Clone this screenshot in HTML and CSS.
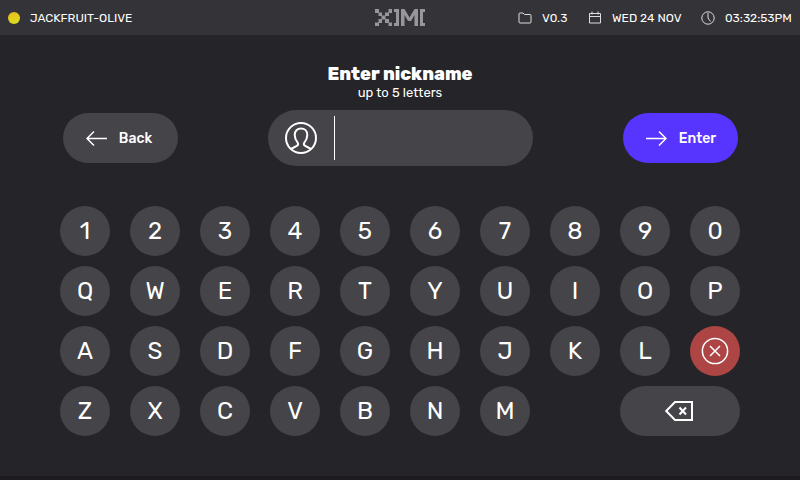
FILE: index.html
```html
<!DOCTYPE html>
<html lang="en">
<head>
<meta charset="utf-8">
<title>Enter nickname</title>
<link rel="stylesheet" href="styles.css">
</head>
<body>
<header class="bar">
  <div class="bar-left"><span class="dot"></span><span class="host">JACKFRUIT-OLIVE</span></div>
  <svg class="logo" width="50" height="17" viewBox="0 0 50 17" fill="#97969a">
    <path d="M0 0h4v4H0zM13.500 0H17v4h-3.500zM3.500 3.500H7V7H3.500zM10 3.500h4V7h-4zM6.500 6.500h4v4h-4zM3.500 10H7v4H3.500zM10 10h4v4h-4zM0 13.500h4V17H0zM13.500 13.500H17V17h-3.500z"/>
    <path d="M19 0h5v17h-5v-3h2V3h-2zM26 0h3.500l5 8.500L39.500 0H43v17h-3.500V6l-3.500 6h-3l-3.500-6v11H26zM45 0h5v3h-2v11h2v3h-5z"/>
  </svg>
  <div class="bar-right">
    <svg class="ico" width="14" height="12" viewBox="0 0 14 12"><path d="M1 10V2q0-1 1-1h3l1.500 1.500H12q1 0 1 1V10q0 1-1 1H2q-1 0-1-1z"/></svg>
    <span class="version">V0.3</span>
    <svg class="ico" width="12" height="13" viewBox="0 0 12 13"><path d="M.5 2.500h11v9.500H.5zM.5 5.500h11M3 .5v3M9 .5v3"/></svg>
    <span class="date">WED 24 NOV</span>
    <svg class="ico" width="14" height="14" viewBox="0 0 14 14"><circle cx="7" cy="7" r="6.200"/><path d="M7 2v5l2.500 3.500"/></svg>
    <span class="time">03:32:53PM</span>
  </div>
</header>
<main class="page">
  <h1 class="title">Enter nickname</h1>
  <p class="hint">up to 5 letters</p>
  <div class="entry">
    <button class="pill back"><svg width="22" height="16" viewBox="0 0 22 16"><path d="M21 8.500H1M8 1.500l-7 7 7 7"/></svg><span>Back</span></button>
    <div class="field">
      <svg class="avatar" width="34" height="34" viewBox="0 0 34 34"><circle cx="17" cy="17" r="15"/><path d="M7 28l5.800-3.100q2-1 1-3c-2-2.700-3.100-4.900-3.100-8 0-4 2.600-6.400 6.300-6.400s6.300 2.400 6.300 6.400c0 3.100-1.100 5.300-3.100 8q-1 2 1 3L27 28"/></svg>
      <span class="caret"></span>
    </div>
    <button class="pill primary"><svg width="22" height="16" viewBox="0 0 22 16"><path d="M1 8.500h20M14 1.500l7 7-7 7"/></svg><span>Enter</span></button>
  </div>
  <div class="keys">
    <button>1</button><button>2</button><button>3</button><button>4</button><button>5</button><button>6</button><button>7</button><button>8</button><button>9</button><button>0</button>
    <button>Q</button><button>W</button><button>E</button><button>R</button><button>T</button><button>Y</button><button>U</button><button>I</button><button>O</button><button>P</button>
    <button>A</button><button>S</button><button>D</button><button>F</button><button>G</button><button>H</button><button>J</button><button>K</button><button>L</button>
    <button class="clear"><svg width="28" height="28" viewBox="0 0 28 28"><circle cx="14" cy="14" r="12.600"/><path d="M9 9l10 10M19 9L9 19"/></svg></button>
    <button>Z</button><button>X</button><button>C</button><button>V</button><button>B</button><button>N</button><button>M</button>
    <button class="erase"><svg width="28" height="20" viewBox="0 0 28 20"><path d="M10 1h17v18H10L1.200 10zM14.500 6.500l6.500 7M21 6.500l-6.500 7"/></svg></button>
  </div>
</main>
</body>
</html>
```
FILE: styles.css
```css
* { box-sizing: border-box; }
body {
  margin: 0;
  width: 800px;
  height: 480px;
  overflow: hidden;
  background: #252429;
  color: #fff;
  font-family: Rubik, Roboto, "Liberation Sans", sans-serif;
  border-bottom: 4px solid #1d1a20;
}
.bar {
  height: 35px;
  padding: 0 8px;
  display: grid;
  grid-template-columns: 1fr 50px 1fr;
  align-items: center;
  background: #343338;
  font-size: 12px;
  line-height: 16px;
  white-space: nowrap;
}
.bar-left, .bar-right { display: flex; align-items: center; }
.bar-right { justify-content: flex-end; }
.dot {
  width: 12px;
  height: 12px;
  margin-right: 10px;
  border-radius: 50%;
  background: linear-gradient(160deg, #eeb91f, #d5e51e);
}
.ico { flex: none; fill: none; stroke: #dddde0; stroke-width: 1; }
.version { width: 26px; margin: 0 21px 0 10px; }
.date { width: 69px; margin: 0 20px 0 11px; }
.time { width: 67px; margin-left: 10px; }
.page { padding: 28px 60px 0; }
.title {
  margin: 0;
  font-size: 18px;
  line-height: 22px;
  font-weight: 800;
  text-align: center;
}
.hint {
  margin: 0;
  font-size: 13px;
  line-height: 16px;
  text-align: center;
}
.entry {
  height: 56px;
  margin: 9px 2px 0 3px;
  display: flex;
  align-items: center;
  justify-content: space-between;
}
button {
  padding: 0;
  border: 0;
  color: #fff;
  background: #454449;
  font-family: inherit;
  display: flex;
  align-items: center;
  justify-content: center;
}
svg { display: block; }
button svg, .avatar { fill: none; stroke: #fff; stroke-width: 1.500; }
.pill {
  width: 115px;
  height: 50px;
  gap: 12px;
  border-radius: 25px;
  font-size: 14px;
  font-weight: 500;
}
.back { gap: 11px; padding-right: 3px; }
.primary { background: #5835ff; }
.field {
  width: 265px;
  height: 56px;
  padding-left: 16px;
  display: flex;
  align-items: center;
  border-radius: 28px;
  background: #454449;
}
.field .avatar { stroke-width: 2; }
.caret { width: 1px; height: 44px; margin-left: 16px; background: #fff; }
.keys {
  margin-top: 40px;
  display: grid;
  grid-template-columns: repeat(10, 50px);
  grid-auto-rows: 50px;
  gap: 10px 20px;
}
.keys button { border-radius: 25px; font-size: 24px; line-height: 28px; }
.keys .clear { background: #ad4545; }
.keys .erase { grid-column: 9 / 11; padding-right: 2px; }
.erase svg { stroke-width: 2; }
```
